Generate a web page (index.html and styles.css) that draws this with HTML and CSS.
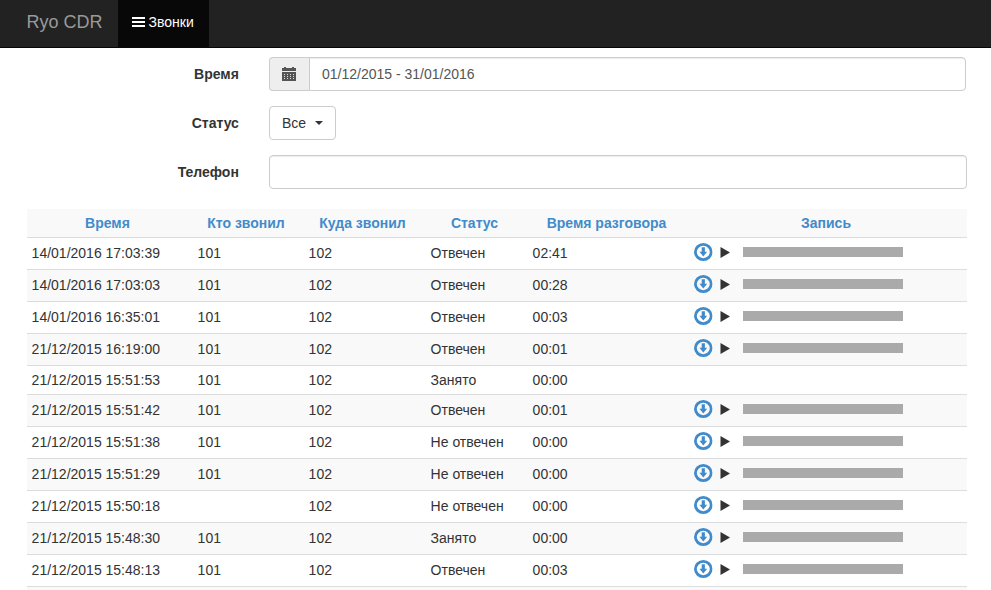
FILE: index.html
```
<!DOCTYPE html>
<html lang="ru">
<head>
<meta charset="utf-8">
<title>Ryo CDR</title>
<link rel="stylesheet" href="styles.css">
</head>
<body>
<svg width="0" height="0" class="sprite">
  <symbol id="download" viewBox="0 0 18.6 18">
    <ellipse cx="9.3" cy="9" rx="7.9" ry="7.6" fill="none" stroke="currentColor" stroke-width="2.8"/>
    <path d="M7.7 4.3h3.2v4.5h2.3L9.3 13.4 5.4 8.8h2.3z" fill="currentColor"/>
  </symbol>
  <symbol id="play" viewBox="0 0 10 11"><path d="M.5 0L10 5.5.5 11z" fill="currentColor"/></symbol>
</svg>
<nav class="navbar">
  <a class="brand">Ryo CDR</a>
  <a class="tab"><svg class="menu-icon" viewBox="0 0 13 10"><path d="M0 0h13v2H0zM0 4h13v2H0zM0 8h13v2H0z" fill="currentColor"/></svg>Звонки</a>
</nav>
<main class="page">
  <form class="filters">
    <div class="field"><label>Время</label>
      <div class="group">
        <span class="addon"><svg class="calendar" viewBox="0 0 14 14"><path d="M2 0h2v1h6V0h2v1h2v3H0V1h2zM0 5h14v9H0z" fill="#555"/><path d="M2 7h1v1H2zM5 7h1v1H5zM8 7h1v1H8zM11 7h1v1h-1zM2 9h1v1H2zM5 9h1v1H5zM8 9h1v1H8zM11 9h1v1h-1zM2 11h1v1H2zM5 11h1v1H5zM8 11h1v1H8zM11 11h1v1h-1z" fill="#ddd"/></svg></span>
        <div class="input">01/12/2015 - 31/01/2016</div>
      </div>
    </div>
    <div class="field"><label>Статус</label><div class="select">Все<span class="caret"></span></div></div>
    <div class="field"><label>Телефон</label><div class="input"></div></div>
  </form>
  <table>
    <colgroup><col class="c-time"><col class="c-from"><col class="c-to"><col class="c-status"><col class="c-length"><col></colgroup>
    <thead><tr><th>Время</th><th>Кто звонил</th><th>Куда звонил</th><th>Статус</th><th>Время разговора</th><th>Запись</th></tr></thead>
    <tbody id="calls"></tbody>
  </table>
</main>
<script src="calls.js"></script>
</body>
</html>
```
FILE: styles.css
```
* { box-sizing: border-box; }
body {
  margin: 0;
  height: 590px;
  overflow: hidden;
  background: #fff;
  color: #333;
  font: 14px/20px "Liberation Sans", Arial, sans-serif;
}
.sprite { display: none; }
svg { display: block; flex: none; }
.navbar {
  display: flex;
  height: 48px;
  padding-left: 12px;
  background: #222;
  border-bottom: 1px solid #080808;
}
.brand {
  width: 106px;
  padding: 12px 14.5px;
  color: #999;
  font-size: 18px;
}
.tab {
  display: flex;
  width: 91px;
  padding: 12px 14px;
  background: #080808;
  color: #fff;
}
.menu-icon { width: 13px; height: 10px; margin: 5px 3.5px 0 0; }
.page { padding: 9px 24px 0 27px; }
.field {
  display: flex;
  height: 34px;
  margin-bottom: 15px;
}
label {
  width: 211.9px;
  margin-right: 30.1px;
  padding-top: 7px;
  text-align: right;
  font-weight: bold;
}
.group { display: flex; width: 697px; }
.addon {
  width: 40px;
  padding: 9px 12px;
  background: #eee;
  border: 1px solid #ccc;
  border-right: 0;
  border-radius: 4px 0 0 4px;
}
.calendar { width: 14px; height: 14px; }
.input {
  width: 698px;
  padding: 6px 12px;
  border: 1px solid #ccc;
  border-radius: 4px;
  box-shadow: inset 0 1px 1px rgba(0,0,0,.075);
  color: #555;
}
.group .input { flex: 1; border-radius: 0 4px 4px 0; }
.select {
  display: flex;
  align-items: center;
  width: 67px;
  padding: 0 12px;
  border: 1px solid #ccc;
  border-radius: 4px;
}
.caret {
  margin-left: 9px;
  border: 4px solid transparent;
  border-top-color: #333;
  border-bottom: 0;
}
table {
  width: 940px;
  margin-top: 20px;
  table-layout: fixed;
  border-collapse: separate;
  border-spacing: 0;
}
.c-time { width: 166px; }
.c-from { width: 111px; }
.c-to { width: 122px; }
.c-status { width: 102px; }
.c-length { width: 162px; }
th {
  height: 28px;
  padding: 0 9px 0 4px;
  background: #f9f9f9;
  color: #428bca;
}
td {
  height: 32px;
  padding: 0 5px 1px 4.6px;
  border-top: 1px solid #ddd;
  vertical-align: middle;
}
td:last-child { padding-left: 4.2px; }
.short td { height: 29px; padding-bottom: 0; }
tbody tr:nth-child(even) td { background: #f9f9f9; }
.record { display: flex; align-items: center; height: 18px; margin-top: -2px; }
.download { width: 18.6px; height: 18px; color: #428bca; }
.play { width: 10px; height: 11px; margin: 1px 12.7px 0 7.5px; }
.bar { width: 160px; height: 10px; background: #aaa; }
```
FILE: calls.js
```
const calls = [
  ['14/01/2016 17:03:39', '101', '102', 'Отвечен', '02:41', true],
  ['14/01/2016 17:03:03', '101', '102', 'Отвечен', '00:28', true],
  ['14/01/2016 16:35:01', '101', '102', 'Отвечен', '00:03', true],
  ['21/12/2015 16:19:00', '101', '102', 'Отвечен', '00:01', true],
  ['21/12/2015 15:51:53', '101', '102', 'Занято', '00:00', false],
  ['21/12/2015 15:51:42', '101', '102', 'Отвечен', '00:01', true],
  ['21/12/2015 15:51:38', '101', '102', 'Не отвечен', '00:00', true],
  ['21/12/2015 15:51:29', '101', '102', 'Не отвечен', '00:00', true],
  ['21/12/2015 15:50:18', '', '102', 'Не отвечен', '00:00', true],
  ['21/12/2015 15:48:30', '101', '102', 'Занято', '00:00', true],
  ['21/12/2015 15:48:13', '101', '102', 'Отвечен', '00:03', true],
  ['', '', '', '', '', false]
];
const record = '<div class="record"><svg class="download"><use href="#download"/></svg><svg class="play"><use href="#play"/></svg><span class="bar"></span></div>';
document.getElementById('calls').innerHTML = calls.map(call =>
  `<tr${call[5] ? '' : ' class="short"'}>${call.slice(0, 5).map(text => `<td>${text}</td>`).join('')}<td>${call[5] ? record : ''}</td></tr>`
).join('');
```
